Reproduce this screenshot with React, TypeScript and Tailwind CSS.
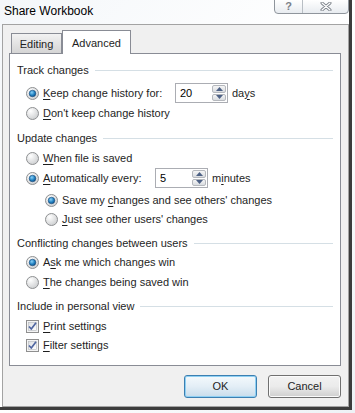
import React from "react";

const Radio = ({ checked }: { checked?: boolean }) => (
  <svg width="13" height="13" viewBox="0 0 13 13" className="shrink-0">
    <defs>
      <radialGradient id="rbg" cx="0.35" cy="0.3" r="0.8">
        <stop offset="0" stopColor="#ffffff" />
        <stop offset="1" stopColor="#c9cbcd" />
      </radialGradient>
      <radialGradient id="rdot" cx="0.4" cy="0.35" r="0.7">
        <stop offset="0" stopColor="#8ad1f8" />
        <stop offset="0.6" stopColor="#1f7fbf" />
        <stop offset="1" stopColor="#0c4a82" />
      </radialGradient>
    </defs>
    <circle cx="6.5" cy="6.5" r="6" fill="url(#rbg)" stroke="#8e9092" strokeWidth="1" />
    {checked && <circle cx="6.5" cy="6.5" r="3.3" fill="url(#rdot)" stroke="#1c4c7a" strokeWidth="0.6" />}
  </svg>
);

const Check = () => (
  <svg width="13" height="13" viewBox="0 0 13 13" className="shrink-0">
    <defs>
      <linearGradient id="cbg" x1="0" y1="0" x2="1" y2="1">
        <stop offset="0" stopColor="#dcdfe3" />
        <stop offset="1" stopColor="#ffffff" />
      </linearGradient>
    </defs>
    <rect x="0.5" y="0.5" width="12" height="12" fill="#f4f4f4" stroke="#8f8f8f" />
    <rect x="2.5" y="2.5" width="8" height="8" fill="url(#cbg)" stroke="#b4b8bd" strokeWidth="0.6" />
    <path d="M3 6.5 L5.3 9 L10 2.8" fill="none" stroke="#4f65a0" strokeWidth="1.7" />
  </svg>
);

const Spin = ({ value }: { value: string }) => (
  <div className="flex h-[20px] w-[53px] shrink-0 items-stretch border border-[#abadb3] bg-white">
    <div className="flex flex-1 items-center pl-[4px] text-black">{value}</div>
    <div className="flex w-[16px] flex-col gap-px p-px">
      <div className="flex flex-1 items-center justify-center rounded-[2px] border border-[#b5b8bd] bg-gradient-to-b from-[#f5f5f5] to-[#d9dce0]">
        <svg width="7" height="4" viewBox="0 0 7 4"><path d="M0 4 L3.5 0 L7 4Z" fill="#4d6185" /></svg>
      </div>
      <div className="flex flex-1 items-center justify-center rounded-[2px] border border-[#b5b8bd] bg-gradient-to-b from-[#f5f5f5] to-[#d9dce0]">
        <svg width="7" height="4" viewBox="0 0 7 4"><path d="M0 0 L3.5 4 L7 0Z" fill="#4d6185" /></svg>
      </div>
    </div>
  </div>
);

const Header = ({ text, mt }: { text: string; mt: string }) => (
  <div className={`flex h-[16px] items-center gap-[6px] pl-[7px] pr-[7px] ${mt}`}>
    <span className="whitespace-nowrap">{text}</span>
    <div className="h-px flex-1 bg-[#d5dfe5]" />
  </div>
);

const Row = ({ indent, mt, children }: { indent: string; mt: string; children: React.ReactNode }) => (
  <div className={`flex h-[20px] items-center gap-[4px] ${indent} ${mt} whitespace-nowrap`}>{children}</div>
);

const U = ({ children }: { children: React.ReactNode }) => <span className="underline underline-offset-[2px]">{children}</span>;

export default function App() {
  return (
    <div className="relative h-[413px] w-[355px] overflow-hidden bg-gradient-to-br from-[#f4f7fa] via-white to-[#eef2f6] font-['Liberation_Sans',Arial,sans-serif] text-[11px] text-[#1e1e1e]">
      {/* window frame */}
      <div className="h-[410px] w-[352px] border-b-[3px] border-r-[3px] border-[#3c3c3c]">
        <div className="relative h-[24px]">
          <div className="pl-[4px] pt-[3px] text-[12px] leading-[16px] text-black">Share Workbook</div>
          <div className="absolute right-0 top-[-1px] flex h-[15px] overflow-hidden rounded-b-[4px] border border-[#8f959c] bg-gradient-to-b from-white to-[#e8ecf0]">
            <div className="flex w-[28px] items-center justify-center border-r border-[#b8bec4] text-[11px] font-bold leading-none text-[#7a8088]">?</div>
            <div className="flex w-[45px] items-center justify-center">
              <svg width="12" height="9" viewBox="0 0 12 9">
                <path d="M2 1 L10 8 M10 1 L2 8" stroke="#7a8088" strokeWidth="3" strokeLinecap="round" />
                <path d="M2 1 L10 8 M10 1 L2 8" stroke="#ffffff" strokeWidth="1.2" strokeLinecap="round" />
              </svg>
            </div>
          </div>
        </div>
        {/* client area */}
        <div className="ml-[2px] h-[383px] w-[347px] border border-[#a3a3a3] bg-[#f0f0f0]">
          <div className="ml-[6px] mt-[6px] w-[332px]">
            <div className="relative z-10 flex h-[22px] items-end pl-[2px]">
              <div className="flex h-[20px] w-[51px] items-center justify-center border border-b-0 border-[#898c95] bg-gradient-to-b from-[#f2f2f2] to-[#d5d5d5] pt-[2px]">Editing</div>
              <div className="-mb-px flex h-[24px] w-[69px] items-start justify-center border border-b-0 border-[#898c95] bg-white pt-[4px]">Advanced</div>
            </div>
            <div className="h-[313px] border border-[#898c95] bg-white">
              <Header text="Track changes" mt="mt-[8px]" />
              <Row indent="pl-[16px]" mt="mt-[5px]">
                <Radio checked />
                <span className="w-[128px]"><U>K</U>eep change history for:</span>
                <Spin value="20" />
                <span>da<U>y</U>s</span>
              </Row>
              <Row indent="pl-[16px]" mt="mt-0">
                <Radio />
                <span><U>D</U>on't keep change history</span>
              </Row>
              <Header text="Update changes" mt="mt-[7px]" />
              <Row indent="pl-[16px]" mt="mt-[2px]">
                <Radio />
                <span><U>W</U>hen file is saved</span>
              </Row>
              <Row indent="pl-[16px]" mt="mt-0">
                <Radio checked />
                <span className="w-[108px]"><U>A</U>utomatically every:</span>
                <Spin value="5" />
                <span>m<U>i</U>nutes</span>
              </Row>
              <Row indent="pl-[35px]" mt="mt-[2px]">
                <Radio checked />
                <span>Save my <U>c</U>hanges and see others' changes</span>
              </Row>
              <Row indent="pl-[35px]" mt="-mt-px">
                <Radio />
                <span><U>J</U>ust see other users' changes</span>
              </Row>
              <Header text="Conflicting changes between users" mt="mt-[6px]" />
              <Row indent="pl-[16px]" mt="mt-px">
                <Radio checked />
                <span>A<U>s</U>k me which changes win</span>
              </Row>
              <Row indent="pl-[16px]" mt="mt-0">
                <Radio />
                <span><U>T</U>he changes being saved win</span>
              </Row>
              <Header text="Include in personal view" mt="mt-[6px]" />
              <Row indent="pl-[16px]" mt="mt-[2px]">
                <Check />
                <span><U>P</U>rint settings</span>
              </Row>
              <Row indent="pl-[16px]" mt="-mt-px">
                <Check />
                <span><U>F</U>ilter settings</span>
              </Row>
            </div>
            <div className="mt-[9px] flex justify-end gap-[11px]">
              <button className="h-[23px] w-[73px] rounded-[3px] border border-[#3c7fb1] bg-gradient-to-b from-[#f4f9fc] via-[#e3eef6] to-[#c8dceb] text-[#1e1e1e] shadow-[inset_0_0_0_1px_#8fd0f3]">OK</button>
              <button className="h-[23px] w-[73px] rounded-[3px] border border-[#707070] bg-gradient-to-b from-[#f2f2f2] via-[#ebebeb] to-[#cfcfcf] text-[#1e1e1e] shadow-[inset_0_0_0_1px_#fbfbfb]">Cancel</button>
            </div>
          </div>
        </div>
      </div>
    </div>
  );
}
